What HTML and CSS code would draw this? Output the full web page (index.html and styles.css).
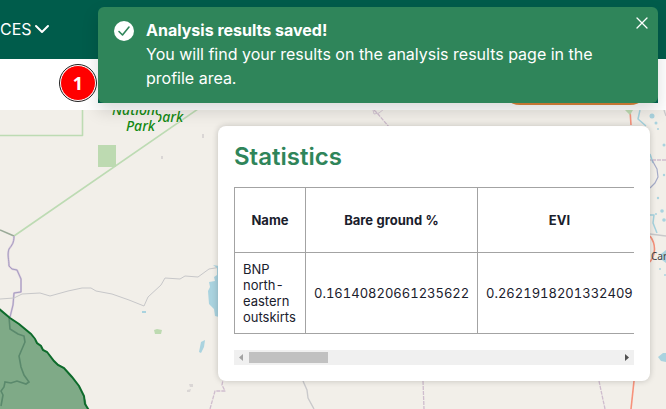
FILE: index.html
```html
<!DOCTYPE html>
<html lang="en">
<head>
<meta charset="utf-8">
<meta name="viewport" content="width=device-width, initial-scale=1">
<title>Analysis results</title>
<link rel="stylesheet" href="styles.css">
</head>
<body>
<header class="topbar">
  <button class="nav-item" type="button">CES
    <svg width="16" height="16" viewBox="0 0 16 16" aria-hidden="true"><path d="M2 5l6 6 6-6" fill="none" stroke="#fff" stroke-width="2" stroke-linecap="round" stroke-linejoin="round"/></svg>
  </button>
</header>
<div class="toolbar"><button class="action" type="button" aria-label="Save"></button></div>
<main class="map">
  <svg class="map-canvas" viewBox="0 110 666 299" preserveAspectRatio="xMinYMin slice" aria-hidden="true">
    <defs>
      <clipPath id="tile-left"><path d="M90 110h68v30H90z"/></clipPath>
      <clipPath id="tile-right"><path d="M158 110h60v30h-60z"/></clipPath>
    </defs>
    <g fill="none" stroke-linejoin="round">
      <path d="M0 135.500H82.500V110M14 236L198 109" stroke="#bddbb3" stroke-width="1.600"/>
      <path d="M0 230l14 6" stroke="#9aaa98" stroke-width="1.600"/>
      <path d="M14 236c0 7-2 9-5 13-2 5 0 11 0 17l3 3 5 1 4 9 0 13-7 1-1 12-3 12" stroke="#d9c6db" stroke-width="2"/>
      <path d="M14 236c0 7-2 9-5 13-2 5 0 11 0 17l3 3 5 1 4 9 0 13-7 1-1 12-3 12" stroke="#a5a0c2" stroke-width="1"/>
      <path d="M0 299l14-1 8-4 18-1 10 3 18-5 14-3h9l5 3 16 3 17 6 15 6 4-9 13-12 4-7 15 1 5-3 13 1 11-8 12-2" stroke="#c7c7c9" stroke-width="1"/>
      <path d="M303 381l4 9 1 8 6 11" stroke="#c9c9cb" stroke-width="1.400"/>
      <path d="M210 409l5-18h10l-3-6 1-5M423 381l1 28M599 381l6 28M374 110l4 4 11 13M666 160h-18" stroke="#cfbdce" stroke-width="1.300" stroke-dasharray="4 1"/>
      <path d="M373 110l1 4 5-1 5-4" stroke="#d4c6d3"/>
      <path d="M634 381l-3 28" stroke="#f7927b" stroke-width="1.600"/>
      <path d="M630 110l1 15M650 236c6 8 6 18 0 26" stroke="#f7927b" stroke-width="1.600"/>
      <path d="M640 110l-2 9 8 7M650 154l3 9M650 215h4l-1 8 4 10" stroke="#a5d3df" stroke-width="1.500"/>
      <path d="M652 160l5 9 1 8-3 6-5 5" stroke="#a5abc8" stroke-width="1.200"/>
      <path d="M650 234l16 2M664 110l2 6" stroke="#c9c9cb" stroke-width="1.300"/>
    </g>
    <path d="M98 145h18v22H98zM154 330l3-1 5 1-1 4h-6zM625 110h8l-3 5z" fill="#bddab1"/>
    <g fill="#aad3df">
      <path d="M213 265l6 1v51l-4-1-1-7-5-5-1-13 2-4-1-5 6-1-1-4 3-2v-7z"/>
      <path d="M201 342l4-2-1 7-3 6-2-1zM142 311h4v2h-4zM658 357l5-4h3v9l-5-1zM661 254l5-4v13l-4-3z"/>
      <circle cx="652" cy="116" r="2.500"/><circle cx="656" cy="123" r="1.500"/><circle cx="658" cy="129" r="1"/><circle cx="664" cy="145" r="1.500"/><circle cx="664" cy="175" r="1.200"/><circle cx="658" cy="198" r="1.200"/><circle cx="662" cy="211" r="1.800"/><circle cx="664" cy="220" r="1.800"/><circle cx="656" cy="214" r="1"/><circle cx="660" cy="269" r="1"/><circle cx="665" cy="275" r="1"/>
    </g>
    <g fill="#dad6d5"><path d="M202 134h2v4h-2zM161 156h2v3h-2zM189 384h4v3h-3zM187 390l4-1-1 3h-3z"/></g>
    <path d="M0 310l10 8 9 6 12 11 5 7 8 8 11 12 8 5 8 9 7 9 5 9 3 7 1 8 7 10H0z" fill="#7faa87"/>
    <path d="M9 317l1 12 8 5 6 2 1 6-6 14 2 11 3 8 5 7-3 2-9-3-6 2-6-1-1 5-3 4 2 4-2 11" fill="none" stroke="#5a896c" stroke-width="1.600"/>
    <path d="M-2 308l12 10 9 6 12 10 4 5 2 4 4 3 2 4 4 2 7 9 4 4 6 3 8 9 7 9 5 10 1 8 5 8" fill="none" stroke="#0d6b2b" stroke-width="2"/>
    <g class="park-label">
      <text x="112" y="115" clip-path="url(#tile-left)">National</text>
      <text x="126" y="131">Park</text>
      <text x="154" y="122" clip-path="url(#tile-right)">park</text>
    </g>
    <text class="town-label" x="651" y="260">Carl</text>
  </svg>
  <section class="panel" aria-labelledby="stats-title">
    <h2 id="stats-title">Statistics</h2>
    <div class="table-scroll">
      <table>
        <thead><tr><th class="col-name">Name</th><th class="col-value">Bare ground %</th><th class="col-evi">EVI</th></tr></thead>
        <tbody><tr><td>BNP north-eastern outskirts</td><td>0.16140820661235622</td><td>0.2621918201332409</td></tr></tbody>
      </table>
    </div>
    <div class="scrollbar">
      <button type="button" aria-label="Scroll left"><svg width="15" height="15" viewBox="0 0 15 15"><path d="M9 4v7L5 7.500z" fill="#a3a3a3"/></svg></button>
      <div class="track"><div class="thumb"></div></div>
      <button type="button" aria-label="Scroll right"><svg width="15" height="15" viewBox="0 0 15 15"><path d="M6 4v7l4-3.500z" fill="#505050"/></svg></button>
    </div>
  </section>
</main>
<div class="toast-holder">
  <div class="toast" role="status">
    <svg class="toast-icon" width="20" height="20" viewBox="0 0 20 20" aria-hidden="true"><circle cx="10" cy="10" r="10" fill="#fff"/><path d="M5 10.500l3.500 3.500 6.500-8" fill="none" stroke="#2f855a" stroke-width="1.600" stroke-linecap="round" stroke-linejoin="round"/></svg>
    <div class="toast-text"><strong>Analysis results saved!</strong><p>You will find your results on the analysis results page in the profile area.</p></div>
    <button class="toast-close" type="button" aria-label="Close"><svg width="12" height="12" viewBox="0 0 12 12"><path d="M1 1l10 10M11 1L1 11" stroke="#fff" stroke-width="1.300" stroke-linecap="round"/></svg></button>
  </div>
</div>
<span class="marker">1</span>
</body>
</html>
```
FILE: styles.css
```css
* { box-sizing: border-box; }
body {
  margin: 0;
  min-height: 100vh;
  display: flex;
  flex-direction: column;
  position: relative;
  overflow: hidden;
  font-family: Inter, "Liberation Sans", sans-serif;
  color: #1a202c;
}
button { border: 0; padding: 0; background: none; color: inherit; font: inherit; }
.topbar { background: #005c4b; padding: 17px 0 18px; }
.nav-item { display: flex; align-items: center; gap: 2px; color: #fff; font-size: 16px; line-height: 24px; }
.nav-item svg { display: block; }
.toolbar { background: #fff; height: 51px; padding: 6px 16px; display: flex; justify-content: flex-end; }
.action { width: 150px; height: 40px; border-radius: 20px; background: #dd843a; }
.map { flex: 1; position: relative; display: flex; justify-content: flex-end; align-items: flex-start; padding: 16px; background: #f2efe9; overflow: hidden; }
.map-canvas { position: absolute; inset: 0; width: 100%; height: 100%; }
.park-label { font: italic 500 14px "Noto Sans", sans-serif; fill: #148a14; stroke: #f2efe9; stroke-width: 1px; paint-order: stroke; }
.town-label { font: 10px "Noto Sans", sans-serif; fill: #444; }
.panel { position: relative; flex: 0 1 432px; min-width: 0; padding: 16px; border-radius: 8px; background: #fff; box-shadow: 0 0 6px rgba(0, 0, 0, .2); }
.panel h2 { margin: 0 0 15px; font-size: 24px; line-height: 30px; font-weight: 600; font-optical-sizing: none; color: #2f855a; }
.table-scroll { overflow: hidden; padding-bottom: 16px; }
table { border-collapse: collapse; table-layout: fixed; width: 408px; font-size: 13px; line-height: 16px; font-variant-numeric: tabular-nums; }
th, td { border: 1px solid #a3a3a3; padding: 8px; text-align: left; }
td { white-space: normal; }
th { height: 65px; text-align: center; font-weight: 700; }
.col-name { width: 71px; }
.col-value { width: 172px; }
.scrollbar { display: flex; height: 15px; background: #f0f0f0; }
.scrollbar svg { display: block; }
.track { flex: 1; padding: 2px 0; }
.thumb { height: 11px; width: 79px; background: #c1c1c1; }
.toast-holder { position: absolute; top: 7px; right: 8px; left: 98px; background: #005c4b; box-shadow: 0 8px 16px rgba(0, 0, 0, .14); }
.toast { display: flex; align-items: flex-start; padding: 11px 10px 13px 16px; border-radius: 6px; background: #2f855a; color: #fff; font-size: 16px; line-height: 24px; }
.toast-icon { flex: none; margin: 3px 12px 0 0; }
.toast-text { flex: 1; padding-right: 30px; }
.toast-text strong { display: block; font-weight: 700; }
.toast-text p { margin: 0; }
.toast-close { flex: none; }
.toast-close svg { display: block; margin-top: -1px; }
.marker { position: absolute; left: 60px; top: 65px; width: 36px; height: 36px; border: 1px solid #fff; border-radius: 50%; outline: 1px solid #222; background: #f00; color: #fff; font: 700 18px/34px "Open Sans", sans-serif; text-align: center; }
```
